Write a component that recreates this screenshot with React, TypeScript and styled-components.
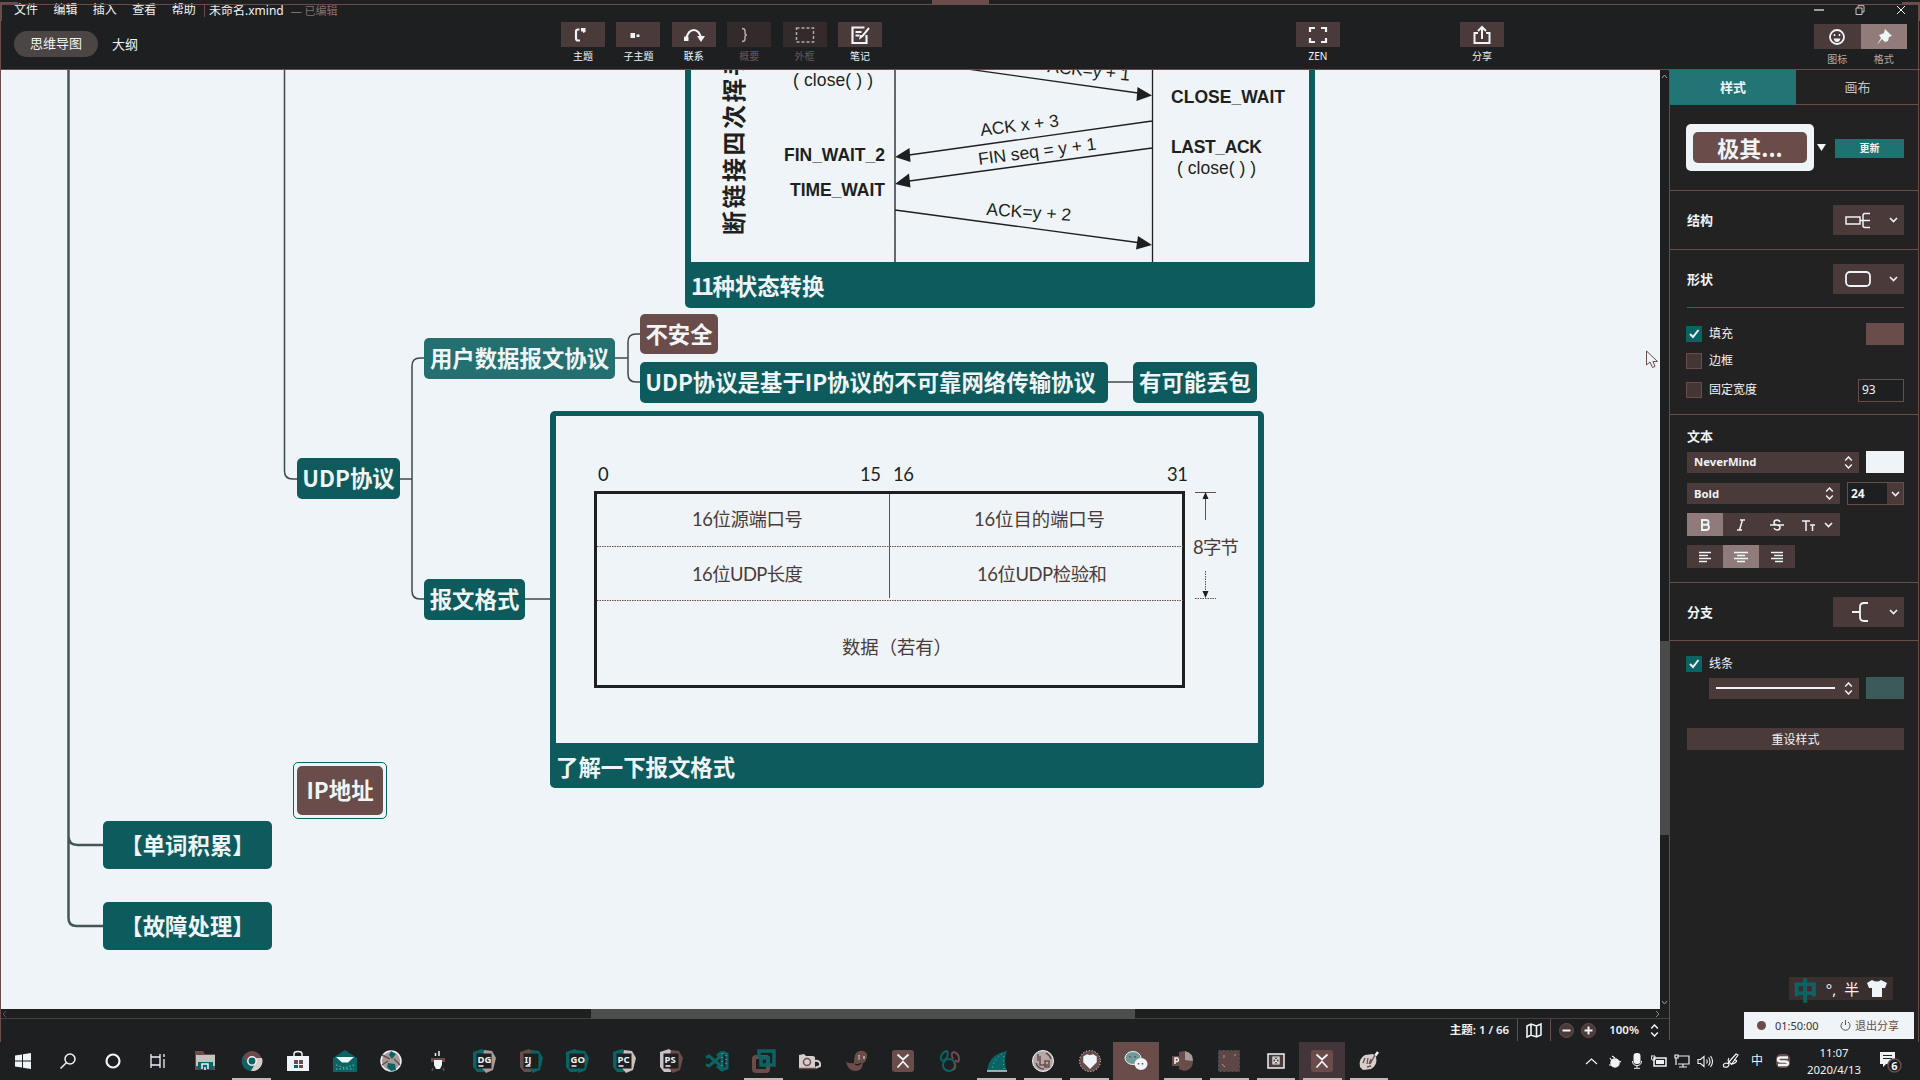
import React from "react";
import styled, { createGlobalStyle } from "styled-components";

const ui = `"Noto Sans", "Noto Sans CJK SC", sans-serif`;
const c = {
  dark: "#1e1f21",
  panel: "#232223",
  brown: "#6a4d4a",
  btn: "#4a3a39",
  teal: "#0a6464",
  node: "#0d5b5c",
  light: "#eef4f7",
};

const Global = createGlobalStyle`
  * { box-sizing: border-box; }
  html, body { margin: 0; background: ${c.dark}; overflow: hidden; }
  svg { display: block; flex: none; }
`;

const Screen = styled.div`
  position: relative;
  width: 1920px;
  height: 1080px;
  display: flex;
  flex-direction: column;
  background: ${c.dark};
  color: ${c.light};
  font-family: ${ui};
  font-size: 12px;
  line-height: 16px;
  white-space: nowrap;
  overflow: hidden;
`;

/* ---------- header ---------- */
const Header = styled.header`
  height: 70px;
  flex: none;
  display: flex;
  flex-direction: column;
  border-bottom: 1px solid ${c.brown};
`;
const TitleBar = styled.div`
  height: 20px;
  padding: 0 14px 0 14px;
  display: flex;
  align-items: center;
  justify-content: space-between;
`;
const MenuItems = styled.nav`
  display: flex;
  align-items: center;
  gap: 15.4px;
`;
const DocTitle = styled.div`
  display: flex;
  gap: 7px;
  margin-left: -7px;
  padding-left: 4px;
  border-left: 1px solid ${c.brown};
  line-height: 13px;
`;
const Edited = styled.span`
  color: #8a6e6b;
  font-size: 11px;
`;
const WindowButtons = styled.div`
  display: flex;
  gap: 31px;
`;
const Toolbar = styled.div`
  display: grid;
  grid-template-columns: 561px 735px 164px 354px auto;
  align-items: start;
`;
const ViewTabs = styled.div`
  display: flex;
  align-items: center;
  gap: 14px;
  padding: 11px 0 0 14px;
  font-size: 13px;
`;
const Pill = styled.div`
  width: 84px;
  height: 26px;
  border-radius: 13px;
  background: #4b4543;
  line-height: 25px;
  text-align: center;
`;
const Tools = styled.div`
  display: flex;
  gap: 11.4px;
  padding-top: 2px;
`;
const ToolBox = styled.div<{ $dim?: boolean }>`
  width: 44px;
  display: flex;
  flex-direction: column;
  align-items: center;
  gap: 2px;
  font-size: 10px;
  line-height: 15px;
  color: ${(p) => (p.$dim ? "#6f5653" : c.light)};
`;
const ToolFace = styled.div<{ $dim?: boolean }>`
  width: 44px;
  height: 25px;
  display: grid;
  place-items: center;
  background: ${(p) => (p.$dim ? "#322a2b" : c.btn)};
`;
const SideToggle = styled.div`
  display: flex;
  padding-top: 4px;
`;
const ToggleBox = styled.div<{ $on?: boolean }>`
  width: 46.5px;
  display: flex;
  flex-direction: column;
  align-items: center;
  gap: 3px;
  font-size: 10px;
  line-height: 15px;
  color: #b5a9a7;
  > div { width: 100%; background: ${(p) => (p.$on ? "#927c79" : c.btn)}; }
`;

/* ---------- workspace ---------- */
const Workspace = styled.div`
  height: 972px;
  flex: none;
  display: flex;
`;
const MapColumn = styled.div`
  width: 1669px;
  display: flex;
  flex-direction: column;
`;
const MapRow = styled.div`
  height: 939px;
  display: flex;
`;
const Canvas = styled.div`
  position: relative;
  width: 1660px;
  height: 939px;
  background: ${c.light};
  overflow: hidden;
`;
const VScroll = styled.div`
  width: 9px;
  padding: 4px 0;
  display: flex;
  flex-direction: column;
  align-items: center;
  justify-content: space-between;
  position: relative;
`;
const VThumb = styled.div`
  position: absolute;
  top: 571px;
  left: 0;
  width: 10px;
  height: 194px;
  background: #4a4a49;
`;
const HScroll = styled.div`
  height: 10px;
  display: flex;
  align-items: center;
  padding: 0 9px 0 2px;
  border-bottom: 1px solid #4d3b3a;
`;
const HThumb = styled.div`
  width: 544px;
  height: 10px;
  margin: 0 auto 0 584px;
  background: #4a4f4e;
`;
const StatusBar = styled.div`
  height: 22px;
  display: flex;
  align-items: center;
  justify-content: flex-end;
  padding-right: 10px;
  font-size: 11.5px;
  font-weight: 600;
`;
const StatusIcon = styled.div`
  margin: 0 8px;
  padding: 0 8px;
  border-left: 1px solid ${c.brown};
  border-right: 1px solid ${c.brown};
  height: 22px;
  display: grid;
  place-items: center;
`;
const Zoom = styled.div`
  display: flex;
  align-items: center;
  gap: 7px;
`;
const Percent = styled.span`
  margin: 0 4px 0 6px;
`;

type TopicProps = { $x: number; $y: number; $w: number; $h: number; $bg?: string; $trail?: number };
const Topic = styled.div<TopicProps>`
  position: absolute;
  left: ${(p) => p.$x}px;
  top: ${(p) => p.$y - 70}px;
  width: ${(p) => p.$w}px;
  height: ${(p) => p.$h}px;
  padding: 0 ${(p) => p.$trail ?? 0}px 3px 0;
  border-radius: 5px;
  background: ${(p) => p.$bg ?? c.node};
  display: flex;
  align-items: center;
  justify-content: center;
  font: 700 22.4px/30px "Noto Sans CJK SC", sans-serif;
  color: ${c.light};
`;
const SelectedTopic = styled.div`
  position: absolute;
  left: 293px;
  top: 692px;
  width: 94px;
  height: 57px;
  padding: 3px;
  border: 1px solid ${c.teal};
  border-radius: 5px;
`;
const SelectedFill = styled.div`
  height: 49px;
  border-radius: 5px;
  background: ${c.brown};
  font: 700 22.4px/46px "Noto Sans CJK SC", sans-serif;
  text-align: center;
`;
const PictureTopic = styled(Topic)`
  flex-direction: column;
  align-items: stretch;
  justify-content: flex-start;
  padding: 5px 6px 0;
`;
const Picture = styled.div<{ $h: number; $top?: number }>`
  height: ${(p) => p.$h}px;
  padding-top: ${(p) => p.$top ?? 0}px;
  flex: none;
  background: ${c.light};
`;
const Caption = styled.div`
  padding-top: 8px;
`;
const Tight = styled.span`
  letter-spacing: -3.5px;
  margin-right: 2px;
`;
const Lines = styled.svg`
  position: absolute;
  left: 0;
  top: 0;
`;
const Pointer = styled.svg`
  position: absolute;
  left: 1646px;
  top: 280px;
`;

/* ---------- side panel ---------- */
const Panel = styled.aside`
  width: 250px;
  height: 970px;
  display: flex;
  flex-direction: column;
  background: ${c.panel};
  border-left: 1px solid ${c.brown};
`;
const Tabs = styled.div`
  height: 35px;
  display: grid;
  grid-template-columns: 126px 1fr;
  border-bottom: 1px solid ${c.brown};
  font-size: 13px;
  line-height: 35px;
  text-align: center;
`;
const Tab = styled.div<{ $on?: boolean }>`
  background: ${(p) => (p.$on ? "#237474" : "transparent")};
  font-weight: ${(p) => (p.$on ? 700 : 400)};
  color: ${(p) => (p.$on ? c.light : "#c9c1c0")};
`;
const Section = styled.section<{ $h: number; $inset?: boolean }>`
  height: ${(p) => p.$h}px;
  flex: none;
  margin: ${(p) => (p.$inset ? "0 15px 0 17px" : "0")};
  padding: ${(p) => (p.$inset ? "0" : "0 15px 0 17px")};
  display: flex;
  align-items: center;
  justify-content: space-between;
  border-bottom: 1px solid ${c.brown};
  font-size: 13px;
  font-weight: 700;
`;
const Block = styled.section<{ $h: number; $top: number; $line?: boolean }>`
  height: ${(p) => p.$h}px;
  flex: none;
  padding: ${(p) => p.$top}px 15px 0 17px;
  display: flex;
  flex-direction: column;
  border-bottom: ${(p) => (p.$line ? `1px solid ${c.brown}` : "0")};
`;
const Preset = styled.div`
  width: 128px;
  height: 47px;
  padding: 8px 7px;
  margin-left: -1px;
  border-radius: 5px;
  background: ${c.light};
  > div {
    height: 31px;
    border-radius: 5px;
    background: ${c.brown};
    font: 700 22px/30px "Noto Sans CJK SC", sans-serif;
    text-align: center;
  }
`;
const Update = styled.div`
  width: 69px;
  height: 19px;
  margin-top: 2px;
  margin-left: 7px;
  background: #1f7272;
  font-size: 10px;
  line-height: 19px;
  text-align: center;
`;
const Picker = styled.div`
  width: 71px;
  height: 30px;
  padding: 0 6px 0 12px;
  display: flex;
  align-items: center;
  justify-content: space-between;
  background: ${c.btn};
`;
const Row = styled.div<{ $h: number; $mt?: number; $ml?: number }>`
  height: ${(p) => p.$h}px;
  margin-top: ${(p) => p.$mt ?? 0}px;
  margin-left: ${(p) => p.$ml ?? 0}px;
  display: flex;
  align-items: center;
  justify-content: space-between;
`;
const Check = styled.div`
  display: flex;
  align-items: center;
  gap: 7px;
  margin-left: -1px;
`;
const Box = styled.div<{ $on?: boolean }>`
  width: 16px;
  height: 16px;
  display: grid;
  place-items: center;
  background: ${(p) => (p.$on ? c.teal : "#453535")};
  border: 1px solid ${(p) => (p.$on ? c.teal : c.brown)};
`;
const Swatch = styled.div<{ $bg: string }>`
  width: 38px;
  height: 22px;
  background: ${(p) => p.$bg};
`;
const Field = styled.div<{ $w: number }>`
  width: ${(p) => p.$w}px;
  height: 23px;
  padding-left: 3px;
  display: flex;
  align-items: center;
  justify-content: space-between;
  background: ${c.dark};
  border: 1px solid ${c.brown};
`;
const FieldDrop = styled.div`
  width: 16px;
  height: 21px;
  display: grid;
  place-items: center;
  background: ${c.btn};
`;
const Heading = styled.div`
  font-size: 13px;
  font-weight: 700;
`;
const Select = styled.div<{ $w: number }>`
  width: ${(p) => p.$w}px;
  height: 21px;
  padding: 0 6px 0 7px;
  display: flex;
  align-items: center;
  justify-content: space-between;
  background: ${c.btn};
  font-size: 11.3px;
  font-weight: 700;
`;
const Stroke = styled.div`
  width: 119px;
  height: 2px;
  background: ${c.light};
`;
const Segments = styled.div`
  display: flex;
  height: 23px;
`;
const Segment = styled.div<{ $w?: number; $on?: boolean }>`
  width: ${(p) => p.$w ?? 36}px;
  height: 23px;
  display: flex;
  align-items: center;
  justify-content: center;
  gap: 8px;
  background: ${(p) => (p.$on ? "#8f7c7a" : c.btn)};
`;
const Reset = styled.div`
  height: 22px;
  margin-top: 29px;
  background: ${c.btn};
  line-height: 23px;
  text-align: center;
`;
const Ime = styled.div`
  position: absolute;
  left: 1789px;
  top: 977px;
  width: 104px;
  height: 23px;
  padding: 0 6px 0 4px;
  display: flex;
  align-items: center;
  justify-content: space-between;
  background: #3a2f2f;
  font-size: 15px;
`;
const ImeMode = styled.b`
  color: ${c.teal};
  font: 900 25px/20px "Noto Sans CJK SC", sans-serif;
`;
const Share = styled.div`
  position: absolute;
  left: 1744px;
  top: 1012px;
  width: 170px;
  height: 27px;
  padding: 0 15px 0 13px;
  display: flex;
  align-items: center;
  background: ${c.light};
  color: #3c3232;
  font-size: 11px;
`;
const Dot = styled.i`
  width: 9px;
  height: 9px;
  margin-right: 9px;
  border-radius: 50%;
  background: ${c.brown};
`;
const Exit = styled.span`
  margin-left: auto;
  display: flex;
  align-items: center;
  gap: 4px;
  color: ${c.brown};
`;
const Frame = styled.div`
  position: absolute;
  left: 0;
  top: 4px;
  width: 1919px;
  height: 1038px;
  border: 1px solid ${c.brown};
  border-bottom: 0;
  pointer-events: none;
`;
const FrameMark = styled.div<{ $x: number; $y: number; $w: number; $h: number }>`
  position: absolute;
  left: ${(p) => p.$x}px;
  top: ${(p) => p.$y}px;
  width: ${(p) => p.$w}px;
  height: ${(p) => p.$h}px;
  background: ${c.brown};
`;

/* ---------- taskbar ---------- */
const Taskbar = styled.footer`
  height: 38px;
  flex: none;
  display: flex;
`;
const Slot = styled.div<{ $w?: number; $open?: boolean; $bg?: string }>`
  width: ${(p) => p.$w ?? 46.57}px;
  height: 38px;
  display: grid;
  place-items: center;
  background: ${(p) => (p.$bg ? `linear-gradient(${p.$bg}, ${p.$bg}) center / 46px 38px no-repeat` : "none")};
  position: relative;
  &::after {
    content: "";
    position: absolute;
    left: 4px;
    right: 4px;
    bottom: 0;
    height: 2px;
    background: ${(p) => (p.$open ? "#c3b6b4" : "transparent")};
  }
`;
const Tray = styled.div`
  margin-left: auto;
  padding-right: 12px;
  display: flex;
  align-items: center;
`;
const TrayCell = styled.div<{ $w: number }>`
  width: ${(p) => p.$w}px;
  display: grid;
  place-items: center;
`;
const Clock = styled.div`
  width: 76px;
  text-align: center;
  font-size: 11.4px;
  line-height: 17px;
`;

/* ---------- icons ---------- */
const Ico = ({ w = 22, h = 22, children }: { w?: number; h?: number; children: React.ReactNode }) => (
  <svg width={w} height={h} viewBox={`0 0 ${w} ${h}`} fill="none" stroke={c.light} strokeWidth="1.5">
    {children}
  </svg>
);
const Down = () => <Ico w={9} h={6}><path d="M1 1l3.500 3.500L8 1" strokeWidth="1.600" /></Ico>;
const UpDown = () => <Ico w={9} h={13}><path d="M1.200 4.400L4.500 1l3.300 3.400M1.200 8.600L4.500 12l3.300-3.400" /></Ico>;
const Tick = () => <Ico w={12} h={10}><path d="M2 5l3 3 5.500-7" strokeWidth="2" /></Ico>;

const toolIcons: Record<string, React.ReactNode> = {
  主题: <Ico><path d="M7.500 5.500H6q-2 0-2 2v7q0 2 2 2h2" strokeWidth="2.200" /><path d="M9 4h4.500v4L11 9V7.500H9z" fill={c.light} stroke="none" /></Ico>,
  子主题: <Ico><path d="M3.500 9H8v5H3.500zM9.500 10.500h3V13h-3z" fill={c.light} stroke="none" /></Ico>,
  联系: <Ico><path d="M3.500 15C4.500 3 17 3 18 15" strokeWidth="2" /><path d="M1 12.500h4.500V17H1zM14 12h8l-4 6z" fill={c.light} stroke="none" /></Ico>,
  概要: <Ico><path d="M4 4.500q3 0 3 2.500v2q0 2 2 2-2 0-2 2v2q0 2.500-3 2.500" stroke="#b5a9a7" /></Ico>,
  外框: <Ico><rect x="2.500" y="4" width="17" height="14" stroke="#b5a9a7" strokeDasharray="3 2" /></Ico>,
  笔记: <Ico><path d="M15.500 3.500H3.500v15.500h14v-8" strokeWidth="2.200" /><path d="M6.500 8h6M6.500 11.500h4" strokeWidth="1.800" /><path d="M20 4l-6.500 8-2 1.500.5-2.500" strokeWidth="2" /></Ico>,
  ZEN: <Ico><path d="M3 8V4h5M14 4h5v4M19 14v4h-5M8 18H3v-4" strokeWidth="2.200" /></Ico>,
  分享: <Ico><path d="M7 9H3.500v10h15V9H15M11 15V3.500M7 7l4-4 4 4" strokeWidth="2" /></Ico>,
};
const Tool = ({ label, dim }: { label: string; dim?: boolean }) => (
  <ToolBox $dim={dim}>
    <ToolFace $dim={dim}>{toolIcons[label]}</ToolFace>
    {label}
  </ToolBox>
);

const Jet = ({ t, a, b }: { t: string; a: string; b: string }) => (
  <Ico w={24} h={24}>
    <path d="M1 3l9-3 5 4-3 19H5l-4-5z" fill={a} stroke="none" />
    <path d="M12 1l8 1 4 7-3 12-7 3-5-6z" fill={b} stroke="none" />
    <rect x="4.500" y="4.500" width="15" height="15" fill={c.dark} stroke="none" />
    <text x="5.500" y="13.500" fontSize="9.500" fontWeight="700" fill={c.light} stroke="none">{t}</text>
    <path d="M6.500 17h5" />
  </Ico>
);
const XLogo = () => (
  <Ico>
    <rect width="22" height="22" rx="3" fill={c.brown} stroke="none" />
    <path d="M5.500 4.500l5.500 5 5.500-5M5.500 17.500l5.500-6 5.500 6" strokeWidth="1.800" />
  </Ico>
);

type App = { w?: number; open?: boolean; bg?: string; icon: React.ReactNode };
const apps: App[] = [
  { w: 45, icon: <Ico w={16} h={16}><path d="M0 2.500l7-1v6H0zM8 1.300L16 0v7.500H8zM0 8.500h7v6l-7-1zM8 8.500h8V16l-8-1.200z" fill={c.light} stroke="none" /></Ico> },
  { w: 45, icon: <Ico w={16} h={16}><circle cx="10" cy="6" r="5" /><path d="M6.500 9.500L.5 15.500" /></Ico> },
  { w: 45, icon: <Ico w={16} h={16}><circle cx="8" cy="8" r="6.500" strokeWidth="2.200" /></Ico> },
  { w: 46.7, icon: <Ico w={16} h={16}><path d="M1 1v3h9V1M1 15v-3h9v3M1 4.500v7M10 4.500v7M14 1v3M14 6v9" strokeWidth="1.300" /></Ico> },
  { icon: <Ico><path d="M1 1h8l2 3h10v16H1z" fill={c.brown} stroke="none" /><path d="M2 5h19v11H2z" fill="#c9c1c0" stroke="none" /><path d="M4 12h15v8H4z" fill={c.teal} stroke="none" /><path d="M8 19v-5h6v5M11 17v3" /></Ico> },
  { open: true, icon: <Ico><circle cx="11" cy="11" r="10" fill={c.brown} stroke="none" /><path d="M2 6a10 10 0 0 0 8 15l5-8H6z" fill={c.teal} stroke="none" /><path d="M21 8a10 10 0 0 1-11 13l5-9-1-4z" fill="#d6cecd" stroke="none" /><circle cx="11" cy="11" r="4.200" fill={c.teal} /></Ico> },
  { icon: <Ico><path d="M7 7V4q0-2.500 4-2.500T15 4v3" /><path d="M0 6h22v15H0z" fill={c.light} stroke="none" /><path d="M7 10h4v4H7zM12 10h4v4h-4zM12 15h4v3h-4z" fill={c.brown} stroke="none" /><path d="M7 15h4v3H7z" fill={c.teal} stroke="none" /></Ico> },
  { icon: <Ico w={24}><path d="M0 8l12-8 12 8v14H0z" fill={c.teal} stroke="none" /><path d="M3 7h18l-6 5.500H9z" fill={c.light} stroke="none" /><path d="M3 15l9 3 9-3M3 19h18" stroke="#5f9a9b" strokeDasharray="1.500 2" /></Ico> },
  { icon: <Ico><circle cx="11" cy="11" r="10" fill="#a89b9a" /><path d="M11 1l5 3-4 5-3-4zM8 13l7 1 1 6-5 1-4-4z" fill={c.teal} stroke="none" /><path d="M2 5l8 4M2 15l6-4M14 9l6 6" stroke={c.brown} /></Ico> },
  { icon: <Ico w={16}><path d="M5.500 3v3M9 1v5" /><path d="M1 8h14v4H1z" fill={c.brown} stroke="none" /><path d="M4 10h8v5l-2 4H6l-2-4z" fill={c.light} stroke="none" /><path d="M3 18l-1 3M13 18l1 3" stroke={c.brown} /></Ico> },
  { icon: <Jet t="DG" a={c.teal} b="#a89b9a" /> },
  { icon: <Jet t="IJ" a={c.brown} b={c.teal} /> },
  { icon: <Jet t="GO" a={c.teal} b={c.teal} /> },
  { icon: <Jet t="PC" a={c.teal} b="#c9c1c0" /> },
  { icon: <Jet t="PS" a="#c9c1c0" b={c.brown} /> },
  { icon: <Ico w={24}><path d="M1 7.500l3-1.500 13 11V5L4 16l-3-1.500M17 2l5 2v14l-5 2-5-4M17 2l-5 4" stroke={c.teal} strokeWidth="3" /><path d="M17 3v16M21 5v12" stroke="#8fb5b7" strokeWidth="1" strokeDasharray="1 3" /></Ico> },
  { open: true, icon: <Ico w={24} h={24}><rect x="2" y="8" width="14" height="14" rx="2" stroke={c.brown} strokeWidth="4" /><path d="M7 8V2h15v14h-6M9 16V9h7v7z" stroke={c.teal} strokeWidth="3.500" /></Ico> },
  { icon: <Ico><path d="M0 5l5-1 2 2h7l2 1v12H0z" fill="#d6cecd" stroke="none" /><circle cx="8" cy="12" r="3.500" stroke={c.brown} /><path d="M15 11q7-1 6 5l-5 2" stroke="#d6cecd" strokeWidth="2" /><path d="M0 18.500h17" stroke={c.brown} /></Ico> },
  { icon: <Ico><path d="M0 12q5 2 8 1 0-4 1-8 3-5 8-4t4 6-4 6q-1 8-7 8-8 0-10-9z" fill={c.brown} stroke="none" /><path d="M9 14q3 2 6-1M13 6v4" stroke={c.dark} /><path d="M13 5v5M18 6v3" stroke={c.light} strokeWidth="1" /></Ico> },
  { icon: <XLogo /> },
  { icon: <Ico><circle cx="10" cy="15" r="6" stroke={c.teal} strokeWidth="2" /><path d="M6 10Q1 12 2 7t6-6q2 3-1 8z" stroke={c.teal} strokeWidth="2" /><path d="M14 9q-3-6 1-7 5 2 5 7t-4 1M15 12q3 5-1 8" stroke={c.brown} strokeWidth="2" /></Ico> },
  { open: true, icon: <Ico><path d="M1 21Q3 4 21 1q-4 9 0 20z" fill={c.teal} stroke="none" /><path d="M16 4Q8 9 6 19M18 6q-1 8 0 13" stroke="#8fb5b7" strokeWidth="1" strokeDasharray="1 3" /><path d="M1 21h20" stroke="#d6cecd" /></Ico> },
  { open: true, icon: <Ico><circle cx="11" cy="11" r="10.500" fill="#b5a9a7" stroke={c.light} strokeWidth="1" /><path d="M6 4v7M8 6v9h8M13 11h4v6h-4zM4 13q2 6 8 6M14 3q4 2 5 6" stroke={c.brown} /></Ico> },
  { open: true, icon: <Ico><circle cx="11" cy="11" r="10.500" fill={c.brown} strokeDasharray="1 2" strokeWidth="1" /><path d="M11 18l-6-6V7l3-2 3 1 3-1 3 2v5z" fill={c.light} /></Ico> },
  { bg: c.brown, icon: <Ico w={24}><ellipse cx="9" cy="8" rx="8" ry="6.500" fill="#6f9a9a" strokeWidth="1" /><ellipse cx="17" cy="14" rx="6.500" ry="6" fill={c.light} stroke="none" /><path d="M14.500 13v1.500M18.500 13v1.500M6 6v1.500M11 6v1.500" stroke={c.brown} /></Ico> },
  { open: true, icon: <Ico><path d="M7 2l5-1q9 2 9 10 0 9-9 10l-5-2z" fill={c.brown} stroke="none" /><path d="M13 1q8 2 8 10l-8-1z" fill="#a89b9a" stroke="none" /><path d="M0 6h9v10H0z" fill={c.brown} stroke="none" /><path d="M3 14V8h2.500q2 2 0 3.500H3" /></Ico> },
  { open: true, icon: <Ico><rect x=".5" y=".5" width="21" height="21" fill="#5e4644" stroke="#3f5a59" strokeDasharray="2 2" strokeWidth="1" /><path d="M6 5v3M4 14l3 3M17 4v2" stroke="#a89b9a" strokeWidth="1" /></Ico> },
  { open: true, icon: <Ico w={18} h={16}><rect x="1" y="1" width="16" height="14" fill={c.btn} /><path d="M6 4h6v7H6zM7 5l4 5M11 5l-4 5" strokeWidth="1.200" /></Ico> },
  { open: true, bg: "#43353a", icon: <XLogo /> },
  { open: true, icon: <Ico><path d="M2 17Q0 9 7 5l8-1 3 3q2 8-5 12l-8 1z" fill="#d6cecd" stroke="none" /><path d="M20 2l-3 4" strokeWidth="2.500" /><path d="M17 5l-5 9M7 8l-2 5M10 8l-1 6M13 9l-2 5M9 17l4-1" stroke={c.brown} strokeWidth="1.300" /></Ico> },
];

/* Closing handshake chart; coordinates share the window's space, offset by the viewBox. */
const Handshake = () => (
  <svg width="618" height="192" viewBox="691 70 618 192" fontFamily='"Liberation Sans", "Noto Sans CJK SC", sans-serif' fontSize="17.500" fontWeight="400" fill={c.dark}>
    <g stroke={c.dark} strokeWidth="1.300">
      <path d="M895 60V262M1152.500 60V262M960 68L1145 94M1152 121L902 156M1152 148L902 182M895 210L1145 243.500" />
    </g>
    <path d="M1152 95.500l-14.500-8.500-1 14zM895 157l14.500-9 1 14zM895 184l14-10.500 1.500 14zM1152 245l-14-9-2 13.500z" />
    <g fontWeight="700">
      <text x="784" y="161" textLength="101">FIN_WAIT_2</text>
      <text x="790" y="196" textLength="95">TIME_WAIT</text>
      <text x="1171" y="102.500" textLength="114">CLOSE_WAIT</text>
      <text x="1171" y="152.500" textLength="91">LAST_ACK</text>
    </g>
    <text x="793" y="86" textLength="80">( close( ) )</text>
    <text x="1177" y="174" textLength="79">( close( ) )</text>
    <text transform="translate(981 136) rotate(-7)" textLength="79">ACK x + 3</text>
    <text transform="translate(979 165) rotate(-7.500)" textLength="119">FIN seq = y + 1</text>
    <text transform="translate(986 215) rotate(4)" textLength="85">ACK=y + 2</text>
    <text transform="translate(1047 72) rotate(6)" textLength="83">ACK=y + 1</text>
    <text transform="translate(743 235) rotate(-90)" fontSize="24" fontWeight="700" letterSpacing="2.500">断链接四次挥手</text>
  </svg>
);

const Datagram = () => (
  <svg width="702" height="327" viewBox="556 416 702 327" fontFamily='Lato, "Noto Sans CJK SC", sans-serif' fontSize="18.400" fontWeight="400" fill="#4a3b3b">
    <rect x="595.500" y="492.500" width="588" height="194" fill="none" stroke={c.dark} strokeWidth="3" />
    <path d="M889.500 494V598M1195 492.500h21M1205.500 495V520" stroke={c.brown} />
    <path d="M597 546.500H1183M597 600.500H1183M1195 598.500h21M1205.500 571V596" stroke={c.brown} strokeDasharray="1.500 1" />
    <path d="M1205.500 492l-3 7h6zM1205.500 598l-3-7h6z" fill={c.dark} />
    <g fill={c.dark}>
      <text x="598" y="481">0</text>
      <text x="860" y="481" textLength="21">15</text>
      <text x="893" y="481" textLength="21">16</text>
      <text x="1167" y="481" textLength="21">31</text>
    </g>
    <text x="692" y="526" textLength="111">16位源端口号</text>
    <text x="974" y="526" textLength="131">16位目的端口号</text>
    <text x="692" y="581" textLength="111">16位UDP长度</text>
    <text x="977" y="581" textLength="130">16位UDP检验和</text>
    <text x="842" y="654" textLength="110">数据（若有）</text>
    <text x="1193" y="554" textLength="46">8字节</text>
  </svg>
);

const MindMap = () => (
  <Canvas>
    <Lines width="1660" height="939" viewBox="0 70 1660 939" fill="none" stroke="#3d4a4b" strokeWidth="1.500">
      <path d="M68.500 70V918q0 8 8 8H103M68.500 836q0 9 9 9H103" stroke="#435655" strokeWidth="2.500" />
      <path d="M284.500 70V471q0 8 8 8H297M400 479h12M424 358h-4q-8 0-8 8V591q0 8 8 8h4M525 599h25" />
      <path d="M615 358h13M640 334h-4q-8 0-8 8v32q0 8 8 8h4M1108 382h25" />
    </Lines>
    <PictureTopic $x={685} $y={40} $w={630} $h={268}>
      <Picture $h={217} $top={25}><Handshake /></Picture>
      <Caption><Tight>11</Tight>种状态转换</Caption>
    </PictureTopic>
    <Topic $x={640} $y={314} $w={78} $h={40} $bg={c.brown}>不安全</Topic>
    <Topic $x={424} $y={338} $w={191} $h={41} $bg="#247071">用户数据报文协议</Topic>
    <Topic $x={640} $y={362} $w={468} $h={41} $trail={7}>UDP协议是基于IP协议的不可靠网络传输协议</Topic>
    <Topic $x={1133} $y={362} $w={124} $h={41}>有可能丢包</Topic>
    <Topic $x={297} $y={458} $w={103} $h={41}>UDP协议</Topic>
    <Topic $x={424} $y={579} $w={101} $h={41}>报文格式</Topic>
    <PictureTopic $x={550} $y={411} $w={714} $h={377}>
      <Picture $h={327}><Datagram /></Picture>
      <Caption>了解一下报文格式</Caption>
    </PictureTopic>
    <SelectedTopic><SelectedFill>IP地址</SelectedFill></SelectedTopic>
    <Topic $x={103} $y={821} $w={169} $h={48}>【单词积累】</Topic>
    <Topic $x={103} $y={902} $w={169} $h={48}>【故障处理】</Topic>
    <Pointer width="13" height="19" fill={c.light} stroke={c.brown}>
      <path d="M.5 1v14l3.500-3 2.500 5.500 2.500-1-2-5h4.500z" />
    </Pointer>
  </Canvas>
);

const AlignIcon = ({ d }: { d: string }) => <Ico w={14} h={12}><path d={d} strokeWidth="1.400" /></Ico>;

export default function App() {
  return (
    <Screen>
      <Global />
      <Header>
        <TitleBar>
          <MenuItems>
            {["文件", "编辑", "插入", "查看", "帮助"].map((m) => <span key={m}>{m}</span>)}
            <DocTitle>未命名.xmind<Edited>— 已编辑</Edited></DocTitle>
          </MenuItems>
          <WindowButtons>
            <Ico w={10} h={10}><path d="M0 5h10" strokeWidth="1.200" /></Ico>
            <Ico w={10} h={10}><path d="M1 3h6v6.500H1zM3 3V.7h6V7H7" strokeWidth="1" stroke="#c9c1c0" /></Ico>
            <Ico w={10} h={10}><path d="M1 1l8 8M9 1L1 9" strokeWidth="1" /></Ico>
          </WindowButtons>
        </TitleBar>
        <Toolbar>
          <ViewTabs><Pill>思维导图</Pill><span>大纲</span></ViewTabs>
          <Tools>
            <Tool label="主题" /><Tool label="子主题" /><Tool label="联系" />
            <Tool label="概要" dim /><Tool label="外框" dim /><Tool label="笔记" />
          </Tools>
          <Tools><Tool label="ZEN" /></Tools>
          <Tools><Tool label="分享" /></Tools>
          <SideToggle>
            <ToggleBox>
              <ToolFace><Ico w={18} h={18}><circle cx="9" cy="9" r="7" strokeWidth="1.800" /><path d="M5.500 10.500h7q-1 3.500-3.500 3.500t-3.500-3.500z" fill={c.light} stroke="none" /><path d="M6.500 6v2M11.500 6v2" /></Ico></ToolFace>
              图标
            </ToggleBox>
            <ToggleBox $on>
              <ToolFace><Ico w={18} h={18}><path d="M10 1l7 7-3 1-1 4-3 1-3-3-5 6 4-7-2-3 3-1 2-1z" fill={c.light} stroke="none" /></Ico></ToolFace>
              格式
            </ToggleBox>
          </SideToggle>
        </Toolbar>
      </Header>

      <Workspace>
        <MapColumn>
          <MapRow>
            <MindMap />
            <VScroll>
              <Ico w={7} h={5}><path d="M1 4l2.500-3L6 4" stroke="#a89b9a" strokeWidth="1" /></Ico>
              <VThumb />
              <Ico w={7} h={5}><path d="M1 1l2.500 3L6 1" stroke="#a89b9a" strokeWidth="1" /></Ico>
            </VScroll>
          </MapRow>
          <HScroll>
            <Ico w={5} h={8}><path d="M4 1L1 4l3 3" stroke={c.brown} strokeWidth="1" /></Ico>
            <HThumb />
            <Ico w={5} h={8}><path d="M1 1l3 3-3 3" stroke="#7f9492" strokeWidth="1" /></Ico>
          </HScroll>
          <StatusBar>
            主题: 1 / 66
            <StatusIcon><Ico w={16} h={15}><path d="M1 3l4-2 5.500 2L15 1v11l-4.500 2L5 12l-4 2zM5 1v11M10.500 3v11" strokeWidth="1.600" /></Ico></StatusIcon>
            <Zoom>
              <Ico w={15} h={15}><circle cx="7.500" cy="7.500" r="7" fill={c.btn} stroke={c.brown} strokeWidth="1" /><path d="M3.500 7.500h8" strokeWidth="2" /></Ico>
              <Ico w={15} h={15}><circle cx="7.500" cy="7.500" r="7" fill={c.btn} stroke={c.brown} strokeWidth="1" /><path d="M3.500 7.500h8M7.500 3.500v8" strokeWidth="2" /></Ico>
              <Percent>100%</Percent>
              <UpDown />
            </Zoom>
          </StatusBar>
        </MapColumn>

        <Panel>
          <Tabs><Tab $on>样式</Tab><Tab>画布</Tab></Tabs>
          <Section $h={86}>
            <Preset><div>极其...</div></Preset>
            <Ico w={9} h={7}><path d="M0 0h9L4.500 7z" fill={c.light} stroke="none" /></Ico>
            <Update>更新</Update>
          </Section>
          <Section $h={59}>
            结构
            <Picker>
              <Ico w={27} h={17}><path d="M1 5h14v7H1zM15 8.500h10M25 1.500h-5q-2 0-2 2v10q0 2 2 2h5" /></Ico>
              <Down />
            </Picker>
          </Section>
          <Section $h={58} $inset>
            形状
            <Picker>
              <Ico w={26} h={16}><rect x="1" y="1" width="24" height="14" rx="4" strokeWidth="1.800" /></Ico>
              <Down />
            </Picker>
          </Section>
          <Block $h={107} $top={15} $line>
            <Row $h={22}><Check><Box $on><Tick /></Box>填充</Check><Swatch $bg={c.brown} /></Row>
            <Row $h={22} $mt={5}><Check><Box />边框</Check></Row>
            <Row $h={24} $mt={6}><Check><Box />固定宽度</Check><Field $w={46}>93</Field></Row>
          </Block>
          <Block $h={168} $top={13} $line>
            <Heading>文本</Heading>
            <Row $h={22} $mt={7}><Select $w={172}>NeverMind<UpDown /></Select><Swatch $bg={c.light} /></Row>
            <Row $h={23} $mt={9}>
              <Select $w={153}>Bold<UpDown /></Select>
              <Field $w={57}><b>24</b><FieldDrop><Down /></FieldDrop></Field>
            </Row>
            <Row $h={23} $mt={8}>
              <Segments>
                <Segment $on><Ico w={12} h={14}><path d="M3 2v10h4q3 0 3-2.700T7 6.800H3M7 6.800q2.500 0 2.500-2.400T7 2H2" strokeWidth="1.900" /></Ico></Segment>
                <Segment><Ico w={10} h={12}><path d="M4 1h5M1 11h5M6.500 1L3.500 11" /></Ico></Segment>
                <Segment><Ico w={14} h={12}><path d="M10 3Q9 1 7 1 4 1 4 3.500T7 6t3 2.500T7 11Q5 11 4 9M0 6h14" /></Ico></Segment>
                <Segment $w={45}><Ico w={14} h={12}><path d="M0 2h8M4 2v10M8 6h5M10.500 6v6" /></Ico><Down /></Segment>
              </Segments>
            </Row>
            <Row $h={23} $mt={9}>
              <Segments>
                <Segment><AlignIcon d="M1 1.500h12M1 4.500h9M1 7.500h12M1 10.500h8" /></Segment>
                <Segment $on><AlignIcon d="M0 1.500h14M3 4.500h8M0 7.500h14M3 10.500h8" /></Segment>
                <Segment><AlignIcon d="M1 1.500h12M4 4.500h9M1 7.500h12M5 10.500h8" /></Segment>
              </Segments>
            </Row>
          </Block>
          <Section $h={58}>
            分支
            <Picker>
              <Ico w={26} h={20}><path d="M7 10h8M23 1h-4q-4 0-4 4v10q0 4 4 4h4" strokeWidth="1.800" /></Ico>
              <Down />
            </Picker>
          </Section>
          <Block $h={150} $top={14}>
            <Row $h={18}><Check><Box $on><Tick /></Box>线条</Check></Row>
            <Row $h={22} $mt={4} $ml={22}><Select $w={150}><Stroke /><UpDown /></Select><Swatch $bg="#3b5a59" /></Row>
            <Reset>重设样式</Reset>
          </Block>
        </Panel>
      </Workspace>

      <Taskbar>
        {apps.map((a, i) => <Slot key={i} $w={a.w} $open={a.open} $bg={a.bg}>{a.icon}</Slot>)}
        <Tray>
          <TrayCell $w={26}><Ico w={13} h={7}><path d="M1 6l5.500-5L12 6" strokeWidth="1.200" /></Ico></TrayCell>
          <TrayCell $w={22}><Ico w={14} h={16}><circle cx="7" cy="10" r="4" fill={c.light} /><path d="M2 5l2 3M1 12h3M11 8l2 1M4 3l3 2" strokeWidth="1.200" /></Ico></TrayCell>
          <TrayCell $w={21}><Ico w={10} h={16}><rect x="1.500" y="0" width="7" height="11" rx="3" fill={c.light} stroke="none" /><path d="M.5 8q0 4.500 4.500 4.500T9.500 8M5 12v3M2 15.300h6" strokeWidth="1" /></Ico></TrayCell>
          <TrayCell $w={23}><Ico w={16} h={12}><rect x="3" y="3" width="12" height="8" /><path d="M5 5h8v4H5z" fill={c.light} stroke="none" /><path d="M0 1h4v4H1z" strokeWidth="1" /></Ico></TrayCell>
          <TrayCell $w={23}><Ico w={16} h={14}><path d="M4 2h11v8H4M9 10v3M5 13h8M1 1h3v3H1zM2 4v7" strokeWidth="1.200" /></Ico></TrayCell>
          <TrayCell $w={24}><Ico w={16} h={13}><path d="M1 4.500h2.500L7 1.500v10L3.500 8.500H1zM9.500 4.500q1.500 2 0 4M11.500 2.500q3 4 0 8M13.500 1q4 5.500 0 11" strokeWidth="1.100" /></Ico></TrayCell>
          <TrayCell $w={27}><Ico w={17} h={16}><path d="M2 14q-2-3 2-4l3 1q0 4-5 3zM6 10l8-9 2 1-7 10M7 5q-2 3 1 5t6-1q2-2-2-2" strokeWidth="1.200" /></Ico></TrayCell>
          <TrayCell $w={26}>中</TrayCell>
          <TrayCell $w={26}><Ico w={16} h={14}><rect x="1" y="0" width="14" height="14" rx="5" fill={c.brown} stroke="none" /><path d="M13 3.500H6q-3 0-3 2t3 2h4q3 0 3 1.800t-3 1.700H3" strokeWidth="2.400" /></Ico></TrayCell>
          <Clock>11:07<br />2020/4/13</Clock>
          <TrayCell $w={36}>
            <Ico w={24} h={24}>
              <path d="M2 3h15v12H8l-3 3v-3H2z" fill={c.light} stroke="none" />
              <path d="M5 6.500h9M5 9.500h9" stroke={c.dark} strokeWidth="1.200" />
              <circle cx="16.500" cy="16.500" r="6.500" fill={c.dark} stroke={c.brown} />
              <text x="13.200" y="20.500" fontSize="11" fontWeight="700" fill={c.light} stroke="none">6</text>
            </Ico>
          </TrayCell>
        </Tray>
      </Taskbar>

      <Ime>
        <ImeMode>中</ImeMode><span>°,</span><span>半</span>
        <Ico w={20} h={17}><path d="M0 3l5-3q5 3 9 0l6 3-2 5h-3v9H5V8H2z" fill={c.light} stroke="none" /></Ico>
      </Ime>
      <Share>
        <Dot />01:50:00
        <Exit><Ico w={11} h={11}><path d="M3 2a4.500 4.500 0 1 0 5 0M5.500 0v5" stroke={c.brown} strokeWidth="1" /></Ico>退出分享</Exit>
      </Share>
      <Frame />
      <FrameMark $x={0} $y={2} $w={18} $h={3} />
      <FrameMark $x={0} $y={2} $w={2} $h={19} />
      <FrameMark $x={932} $y={0} $w={57} $h={5} />
      <FrameMark $x={1902} $y={2} $w={18} $h={3} />
      <FrameMark $x={1918} $y={2} $w={2} $h={19} />
    </Screen>
  );
}
